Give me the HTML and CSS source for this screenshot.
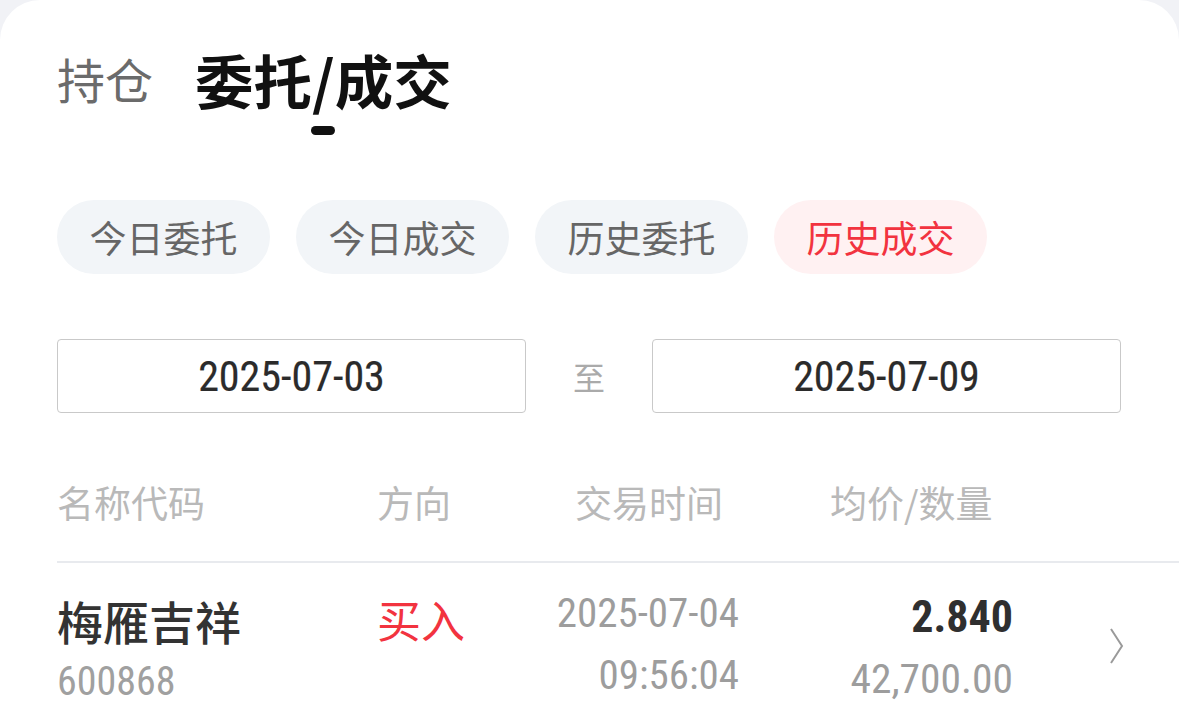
FILE: index.html
```html
<!DOCTYPE html>
<html lang="zh-CN">
<head>
<meta charset="utf-8">
<title>委托/成交</title>
<link rel="stylesheet" href="styles.css">
</head>
<body>
<div class="card">
  <div class="tabs">
    <div class="tab">持仓</div>
    <div class="tab tab-active">
      <span class="tab-label">委托/成交</span>
      <span class="tab-bar"></span>
    </div>
  </div>

  <div class="pills">
    <div class="pill">今日委托</div>
    <div class="pill">今日成交</div>
    <div class="pill">历史委托</div>
    <div class="pill pill-active">历史成交</div>
  </div>

  <div class="dates">
    <div class="date-box">2025-07-03</div>
    <div class="date-sep">至</div>
    <div class="date-box">2025-07-09</div>
  </div>

  <div class="list">
    <div class="list-head">
      <div class="h-name">名称代码</div>
      <div class="h-dir">方向</div>
      <div class="h-time">交易时间</div>
      <div class="h-price">均价/数量</div>
    </div>
    <div class="row">
      <div class="c-name">
        <div class="stock-name">梅雁吉祥</div>
        <div class="stock-code num">600868</div>
      </div>
      <div class="c-dir">买入</div>
      <div class="c-time num">
        <div>2025-07-04</div>
        <div>09:56:04</div>
      </div>
      <div class="c-price num">
        <div class="price">2.840</div>
        <div class="qty">42,700.00</div>
      </div>
      <div class="c-arrow">
        <svg width="16" height="36" viewBox="0 0 16 36"><path d="M2 1 L13 18 L2 35" fill="none" stroke="#9a9a9a" stroke-width="2"/></svg>
      </div>
    </div>
  </div>
</div>
</body>
</html>
```

FILE: styles.css
```css
html, body {
  margin: 0;
  padding: 0;
}
body {
  background: #f1f2f6;
  font-family: "Noto Sans CJK SC", "Noto Sans", sans-serif;
  color: #333;
}
.card {
  background: #fff;
  border-radius: 40px 40px 0 0;
  height: 716px;
  padding-left: 57px;
  box-sizing: border-box;
  overflow: hidden;
}
.num {
  font-family: "Roboto Condensed", "Liberation Sans Narrow", "Roboto", sans-serif;
  white-space: nowrap;
}

/* tabs */
.tabs {
  display: flex;
  align-items: flex-start;
  padding-top: 50px;
  gap: 42px;
}
.tab {
  font-size: 48px;
  line-height: 57px;
  color: #6b6b6b;
}
.tab-active {
  display: flex;
  flex-direction: column;
  align-items: center;
  gap: 19px;
  font-size: 58.5px;
  font-weight: 700;
  color: #111;
}
.tab-bar {
  width: 24px;
  height: 9px;
  border-radius: 5px;
  background: #111;
}

/* pills */
.pills {
  display: flex;
  gap: 26px;
  margin-top: 65px;
}
.pill {
  height: 74px;
  width: 213px;
  border-radius: 37px;
  background: #f2f5f8;
  color: #666;
  font-size: 37px;
  display: flex;
  align-items: center;
  justify-content: center;
}
.pill-active {
  background: #fff1f2;
  color: #f2333f;
}

/* dates */
.dates {
  display: flex;
  align-items: center;
  margin-top: 65px;
  width: 1064px;
}
.date-box {
  width: 469px;
  height: 74px;
  box-sizing: border-box;
  border: 1.5px solid #c9c9c9;
  border-radius: 4px;
  display: flex;
  align-items: center;
  justify-content: center;
  font-family: "Roboto Condensed", "Liberation Sans Narrow", "Roboto", sans-serif;
  font-size: 42px;
  font-weight: 400;
  color: #2b2b2b;
  -webkit-text-stroke: 0.2px #2b2b2b;
}
.date-sep {
  flex: 1;
  text-align: center;
  font-size: 32px;
  color: #aaa;
}

/* list */
.list-head {
  display: flex;
  margin-top: 71px;
  padding-bottom: 40px;
  border-bottom: 2px solid #e8eaee;
  font-size: 37px;
  line-height: 37px;
  color: #b9b9b9;
}
.h-name { width: 320px; }
.h-dir { width: 198px; }
.h-time { width: 255px; }

.row {
  display: flex;
  align-items: flex-start;
  padding-top: 34px;
}
.c-name { width: 320px; }
.stock-name {
  font-size: 46px;
  line-height: 46px;
  font-weight: 500;
  color: #333;
}
.stock-code {
  margin-top: 20px;
  font-size: 40px;
  line-height: 37px;
  color: #a0a0a0;
}
.c-dir {
  width: 172px;
  font-size: 44px;
  line-height: 44px;
  color: #f2333f;
}
.c-time {
  width: 190px;
  text-align: right;
  font-size: 41px;
  line-height: 62px;
  margin-top: -15px;
  color: #9d9d9d;
}
.c-price {
  width: 274px;
  text-align: right;
  margin-top: -2px;
}
.price {
  font-size: 44px;
  line-height: 44px;
  font-weight: 700;
  color: #2f2f2f;
}
.qty {
  margin-top: 20px;
  font-size: 41.5px;
  line-height: 40px;
  color: #9d9d9d;
}
.c-arrow {
  margin-left: 96px;
  margin-top: 31px;
  display: flex;
}
```
